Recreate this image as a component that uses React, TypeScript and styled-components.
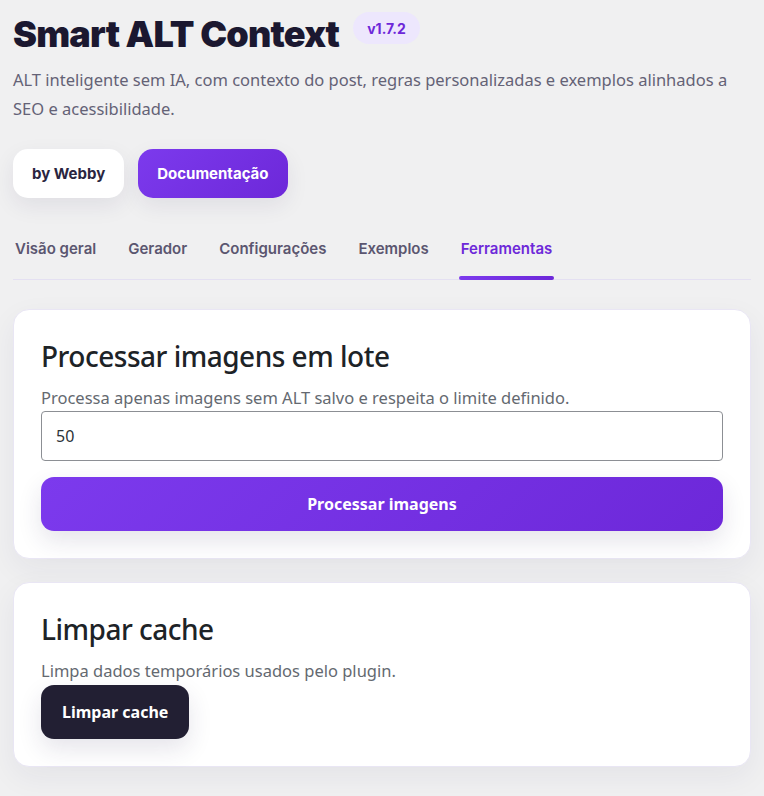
import styled, { createGlobalStyle } from "styled-components";

const GlobalStyle = createGlobalStyle`
  * {
    box-sizing: border-box;
  }
  body {
    margin: 0;
    background: #f0f0f1;
    font-family: "Noto Sans", "Open Sans", sans-serif;
    color: #1d2327;
  }
`;

const tabs = ["Visão geral", "Gerador", "Configurações", "Exemplos", "Ferramentas"];

const App = () => {
  return (
    <>
      <GlobalStyle />
      <Page>
        <Header>
          <TitleRow>
            <Title>Smart ALT Context</Title>
            <Badge>v1.7.2</Badge>
          </TitleRow>
          <Lead>
            ALT inteligente sem IA, com contexto do post, regras personalizadas e exemplos alinhados a
            SEO e acessibilidade.
          </Lead>
          <Actions>
            <PillButton>by Webby</PillButton>
            <PillButton $primary>Documentação</PillButton>
          </Actions>
        </Header>

        <TabBar>
          {tabs.map((tab) => (
            <Tab key={tab} $active={tab === "Ferramentas"}>
              {tab}
            </Tab>
          ))}
        </TabBar>

        <Cards>
          <Card>
            <CardTitle>Processar imagens em lote</CardTitle>
            <CardText>Processa apenas imagens sem ALT salvo e respeita o limite definido.</CardText>
            <NumberInput type="number" defaultValue={50} />
            <ActionButton $block>Processar imagens</ActionButton>
          </Card>

          <Card>
            <CardTitle>Limpar cache</CardTitle>
            <CardText>Limpa dados temporários usados pelo plugin.</CardText>
            <ActionButton $dark>Limpar cache</ActionButton>
          </Card>
        </Cards>
      </Page>
    </>
  );
};

const Page = styled.div`
  padding: 13px 13px 30px;
`;

const Header = styled.header`
  display: flex;
  flex-direction: column;
`;

const TitleRow = styled.div`
  display: flex;
  align-items: center;
  gap: 14px;
`;

const Title = styled.h1`
  margin: 0;
  font-family: Inter, "Noto Sans", sans-serif;
  font-size: 36px;
  font-weight: 900;
  line-height: 1.2;
  letter-spacing: -0.8px;
  color: #1b1830;
`;

const Badge = styled.span`
  display: inline-flex;
  align-items: center;
  height: 32px;
  padding: 0 14px;
  margin-top: -13px;
  border-radius: 999px;
  background: #ede7fd;
  color: #6d28d9;
  font-family: Inter, "Noto Sans", sans-serif;
  font-size: 14px;
  font-weight: 700;
`;

const Lead = styled.p`
  margin: 9px 0 0;
  max-width: 725px;
  font-size: 16.5px;
  line-height: 29px;
  color: #646276;
`;

const Actions = styled.div`
  display: flex;
  gap: 14px;
  margin-top: 26px;
`;

const PillButton = styled.button<{ $primary?: boolean }>`
  height: 49px;
  padding: 0 19px;
  border: none;
  border-radius: 15px;
  font-family: Inter, "Noto Sans", sans-serif;
  font-size: 15px;
  font-weight: 700;
  cursor: pointer;
  color: ${(p) => (p.$primary ? "#ffffff" : "#2a2540")};
  background: ${(p) =>
    p.$primary ? "linear-gradient(135deg, #7c3aed 0%, #6d28d9 100%)" : "#ffffff"};
  box-shadow: 0 8px 22px rgba(40, 30, 80, 0.08);
`;

const TabBar = styled.nav`
  display: flex;
  gap: 28px;
  margin-top: 41px;
  border-bottom: 1px solid #e4e0f2;
`;

const Tab = styled.a<{ $active?: boolean }>`
  position: relative;
  padding: 0 2px 21px;
  font-family: Inter, "Noto Sans", sans-serif;
  font-size: 15px;
  font-weight: 600;
  color: ${(p) => (p.$active ? "#6d28d9" : "#5b5670")};
  cursor: pointer;

  &::after {
    content: "";
    position: absolute;
    left: 0;
    right: 0;
    bottom: -1px;
    height: 4px;
    border-radius: 4px;
    background: ${(p) => (p.$active ? "linear-gradient(90deg, #7c3aed, #6d28d9)" : "transparent")};
  }
`;

const Cards = styled.div`
  display: flex;
  flex-direction: column;
  gap: 23px;
  margin-top: 29px;
`;

const Card = styled.section`
  display: flex;
  flex-direction: column;
  align-items: flex-start;
  padding: 28px 27px 27px;
  background: #ffffff;
  border: 1px solid #e9e6f4;
  border-radius: 16px;
  box-shadow: 0 10px 30px rgba(40, 30, 80, 0.06);
`;

const CardTitle = styled.h2`
  margin: 0 0 10px;
  font-size: 28px;
  font-weight: 500;
  line-height: 1.35;
  letter-spacing: -0.5px;
  color: #1d2327;
`;

const CardText = styled.p`
  margin: 0;
  font-size: 16.5px;
  line-height: 24px;
  color: #646970;
`;

const NumberInput = styled.input`
  width: 100%;
  height: 50px;
  margin-top: 1px;
  padding: 0 14px;
  border: 1px solid #8c8f94;
  border-radius: 4px;
  font-family: "Noto Sans", sans-serif;
  font-size: 16px;
  color: #2c3338;
  background: #ffffff;
  appearance: textfield;

  &::-webkit-inner-spin-button,
  &::-webkit-outer-spin-button {
    -webkit-appearance: none;
    margin: 0;
  }
`;

const ActionButton = styled.button<{ $block?: boolean; $dark?: boolean }>`
  width: ${(p) => (p.$block ? "100%" : "auto")};
  height: 54px;
  margin-top: ${(p) => (p.$block ? "16px" : "2px")};
  padding: 0 21px;
  border: none;
  border-radius: 13px;
  font-family: "Noto Sans", sans-serif;
  font-size: 16px;
  font-weight: 700;
  color: #ffffff;
  cursor: pointer;
  background: ${(p) =>
    p.$dark ? "#221f33" : "linear-gradient(135deg, #7c3aed 0%, #6d28d9 100%)"};
  box-shadow: 0 10px 24px rgba(40, 30, 80, 0.12);
`;

export default App;
